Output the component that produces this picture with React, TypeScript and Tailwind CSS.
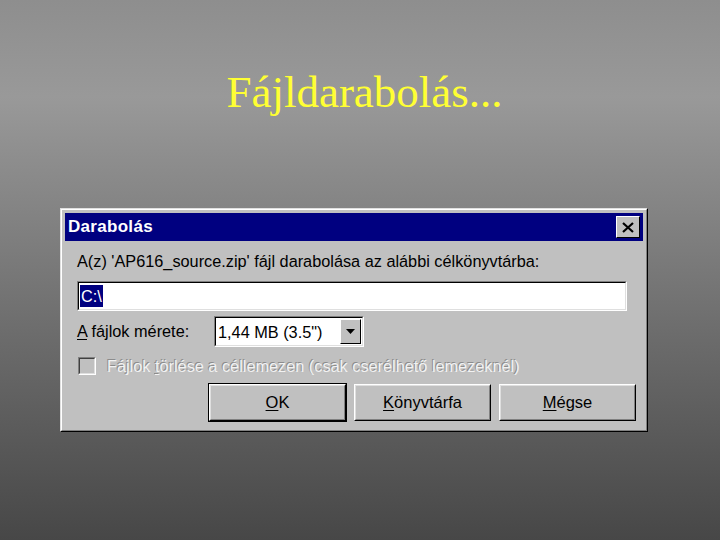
const ui = "font-['Liberation_Sans',Arial,sans-serif]";

function Underlined({ ch }: { ch: string }) {
  return <span className="underline underline-offset-2 decoration-1">{ch}</span>;
}

function Button({ children, isDefault }: { children: React.ReactNode; isDefault?: boolean }) {
  return (
    <div className={isDefault ? "border border-black" : "border border-transparent"}>
      <div className="border-t border-l border-white border-b border-r border-b-black border-r-black">
        <div className="border-t border-l border-[#dfdfdf] border-b border-r border-b-[#808080] border-r-[#808080] h-[35px] flex items-center justify-center text-[16.5px] text-black">
          {children}
        </div>
      </div>
    </div>
  );
}

export default function App() {
  return (
    <div className="w-[720px] h-[540px] overflow-hidden bg-[linear-gradient(to_bottom,#8e8e8e_0%,#999999_18%,#6e6e6e_60%,#474747_100%)] flex flex-col">
      {/* slide heading */}
      <h1 className="mt-[66px] pl-[9px] text-center text-[45px] leading-[52px] text-[#ffff33] font-['Liberation_Serif','Times_New_Roman',serif]">
        Fájldarabolás...
      </h1>

      {/* win95 dialog */}
      <div className={`mt-[90px] ml-[60px] w-[588px] h-[224px] ${ui} border border-t-[#dfdfdf] border-l-[#dfdfdf] border-b-black border-r-black`}>
        <div className="h-full border border-t-white border-l-white border-b-[#808080] border-r-[#808080] bg-[#c0c0c0] p-[3px] flex flex-col">
          {/* title bar */}
          <div className="h-[28px] bg-[#000080] flex items-center justify-between pl-[3px] pr-[3px]">
            <span className="text-white font-bold text-[17px] tracking-[0.3px]">Darabolás</span>
            <div className="w-[24px] h-[22px] bg-[#c0c0c0] border border-t-white border-l-white border-b-black border-r-black flex items-center justify-center">
              <svg width="12" height="11" viewBox="0 0 12 11">
                <path d="M1 1 L11 10 M11 1 L1 10" stroke="black" strokeWidth="2.2" />
              </svg>
            </div>
          </div>

          {/* body */}
          <div className="pl-[12px] pr-[16px] flex flex-col text-[16.3px] text-black">
            <div className="mt-[9px] leading-[22px]">A(z) 'AP616_source.zip' fájl darabolása az alábbi célkönyvtárba:</div>

            <div className="mt-[9px] h-[30px] border border-t-[#808080] border-l-[#808080] border-b-white border-r-white">
              <div className="h-full border border-t-black border-l-black border-b-[#dfdfdf] border-r-[#dfdfdf] bg-white flex items-center pl-[1px]">
                <span className="bg-[#000080] text-white leading-[22px] px-[1px]">C:\</span>
              </div>
            </div>

            <div className="mt-[5px] flex items-center">
              <span className="w-[137px]">
                <Underlined ch="A" /> fájlok mérete:
              </span>
              <div className="w-[150px] h-[31px] border border-t-[#808080] border-l-[#808080] border-b-white border-r-white">
                <div className="h-full border border-t-black border-l-black border-b-[#dfdfdf] border-r-[#dfdfdf] bg-white flex items-center justify-between">
                  <span className="pl-[2px] leading-[22px]">1,44 MB (3.5")</span>
                  <div className="w-[21px] h-[25px] mr-[1px] bg-[#c0c0c0] border border-t-white border-l-white border-b-black border-r-black flex items-center justify-center">
                    <svg width="9" height="5" viewBox="0 0 9 5">
                      <path d="M0 0 H9 L4.5 5 Z" fill="black" />
                    </svg>
                  </div>
                </div>
              </div>
            </div>

            <div className="mt-[8px] flex items-center">
              <div className="w-[18px] h-[18px] ml-[1px] border border-t-[#808080] border-l-[#808080] border-b-white border-r-white">
                <div className="h-full border border-t-[#404040] border-l-[#404040] border-b-[#dfdfdf] border-r-[#dfdfdf] bg-[#c0c0c0]" />
              </div>
              <span className="ml-[11px] leading-[22px] text-[#f2f2f2] [text-shadow:-1px_-1px_0_#8c8c8c]">
                Fájlok <Underlined ch="t" />örlése a céllemezen (csak cserélhető lemezeknél)
              </span>
            </div>

            <div className="mt-[6px] flex justify-end gap-[6px] -mr-[10px]">
              <div className="w-[139px]">
                <Button isDefault>
                  <Underlined ch="O" />K
                </Button>
              </div>
              <div className="w-[139px]">
                <Button>
                  <Underlined ch="K" />önyvtárfa
                </Button>
              </div>
              <div className="w-[139px]">
                <Button>
                  <Underlined ch="M" />égse
                </Button>
              </div>
            </div>
          </div>
        </div>
      </div>
    </div>
  );
}
